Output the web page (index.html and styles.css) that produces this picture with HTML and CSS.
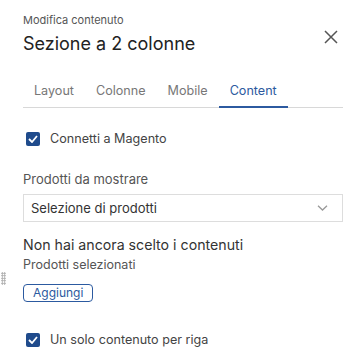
FILE: index.html
```html
<!DOCTYPE html>
<html lang="it">
<head>
    <meta charset="UTF-8">
    <meta name="viewport" content="width=device-width, initial-scale=1.0">
    <title>Modifica contenuto</title>
    <link rel="stylesheet" href="styles.css">
</head>
<body>
    <div class="panel">
        <header class="panel-head">
            <div>
                <div class="subtitle">Modifica contenuto</div>
                <h1>Sezione a 2 colonne</h1>
            </div>
            <button class="close" aria-label="Chiudi">
                <svg width="14" height="14" viewBox="0 0 14 14"><path d="M1 1L13 13M13 1L1 13" stroke="#555" stroke-width="1.5" fill="none"/></svg>
            </button>
        </header>

        <nav class="tabs">
            <span class="tab">Layout</span>
            <span class="tab">Colonne</span>
            <span class="tab">Mobile</span>
            <span class="tab active">Content</span>
        </nav>

        <label class="check">
            <span class="box"><svg width="10" height="8" viewBox="0 0 10 8"><path d="M1 4L4 7L9 1" stroke="#fff" stroke-width="1.8" fill="none"/></svg></span>
            Connetti a Magento
        </label>

        <div class="field">
            <div class="field-label">Prodotti da mostrare</div>
            <div class="select">
                <span>Selezione di prodotti</span>
                <svg width="11" height="6" viewBox="0 0 11 6"><path d="M1 0.8L5.5 5L10 0.8" stroke="#999" stroke-width="1.3" fill="none"/></svg>
            </div>
        </div>

        <div class="empty">
            <div class="empty-title">Non hai ancora scelto i contenuti</div>
            <div class="empty-sub">Prodotti selezionati</div>
            <span class="handle"></span>
            <button class="btn-outline">Aggiungi</button>
        </div>

        <label class="check last">
            <span class="box"><svg width="10" height="8" viewBox="0 0 10 8"><path d="M1 4L4 7L9 1" stroke="#fff" stroke-width="1.8" fill="none"/></svg></span>
            Un solo contenuto per riga
        </label>
    </div>
</body>
</html>
```

FILE: styles.css
```css
body {
    margin: 0;
    font-family: Inter, "Noto Sans", sans-serif;
    background: #fff;
    color: #333;
}
.panel {
    padding: 13px 17px 0 23px;
    position: relative;
}
.panel-head {
    display: flex;
    justify-content: space-between;
    align-items: flex-start;
}
.subtitle {
    font-size: 11px;
    color: #555;
    line-height: 14px;
}
h1 {
    margin: 6px 0 0;
    font-size: 18px;
    font-weight: 400;
    color: #222;
    line-height: 22px;
}
.close {
    background: none;
    border: none;
    padding: 0;
    margin: 17px 5px 0 0;
    cursor: pointer;
    line-height: 0;
}
.tabs {
    display: flex;
    margin-top: 27px;
    border-bottom: 1px solid #d8d8d8;
}
.tab {
    padding: 0 11px 8px;
    font-size: 12.6px;
    line-height: 17px;
    color: #777;
}
.tab.active {
    color: #2c5aa0;
    border-bottom: 2px solid #2c5aa0;
    margin-bottom: -1px;
    padding-bottom: 7px;
}
.check {
    display: flex;
    align-items: center;
    gap: 10px;
    font-size: 12.6px;
    color: #444;
    margin-top: 23px;
    padding-left: 3px;
}
.box {
    width: 14px;
    height: 14px;
    background: #1f4b8c;
    border-radius: 2px;
    display: flex;
    align-items: center;
    justify-content: center;
}
.field {
    margin-top: 25px;
}
.field-label {
    font-size: 13px;
    color: #555;
    line-height: 16px;
}
.select {
    margin-top: 7px;
    height: 28px;
    border: 1px solid #ddd;
    box-sizing: border-box;
    display: flex;
    align-items: center;
    justify-content: space-between;
    padding: 0 14px 0 7px;
    font-size: 13px;
    color: #333;
}
.empty {
    margin-top: 14px;
}
.empty-title {
    font-size: 14.2px;
    color: #333;
    line-height: 18px;
}
.empty-sub {
    font-size: 12.5px;
    color: #555;
    line-height: 16px;
    margin-top: 3px;
}
.handle {
    position: absolute;
    left: 1px;
    top: 272px;
    width: 5px;
    height: 13px;
    background-image: radial-gradient(circle, #aaa 0.9px, transparent 1px);
    background-size: 2.5px 2.5px;
}
.btn-outline {
    display: block;
    margin-top: 11px;
    font-family: inherit;
    font-size: 12px;
    color: #2c5aa0;
    background: #fff;
    border: 1px solid #2c5aa0;
    border-radius: 4px;
    padding: 0 9px;
    height: 18px;
    line-height: 16px;
}
.check.last {
    margin-top: 30px;
}
```
